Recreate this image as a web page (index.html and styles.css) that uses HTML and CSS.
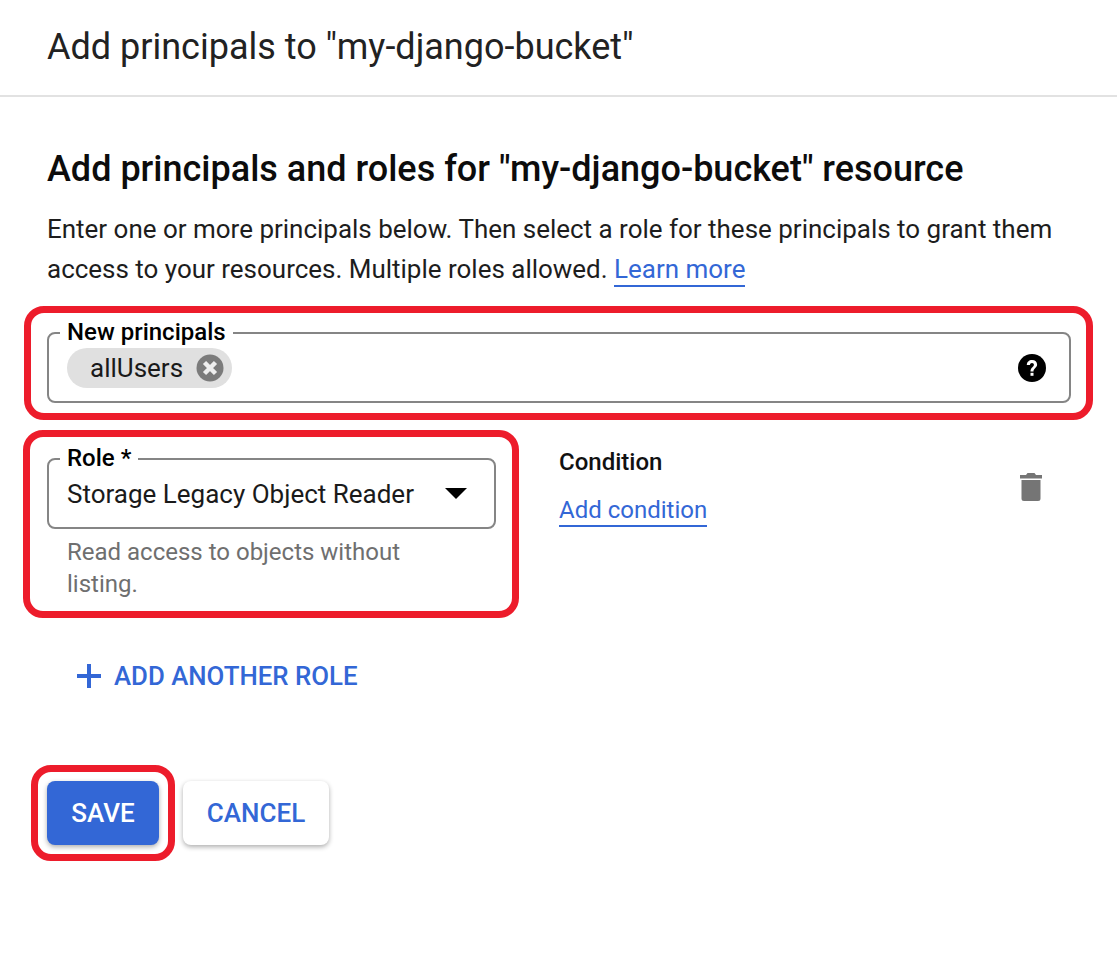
FILE: index.html
```html
<!DOCTYPE html>
<html lang="en">
<head>
<meta charset="utf-8">
<title>Add principals</title>
<link rel="stylesheet" href="styles.css">
</head>
<body>
<header class="top">
  <h1 class="title">Add principals to "my-django-bucket"</h1>
</header>
<main class="content">
  <h2 class="heading">Add principals and roles for "my-django-bucket" resource</h2>
  <p class="intro">Enter one or more principals below. Then select a role for these principals to grant them access to your resources. Multiple roles allowed. <a class="link" href="#">Learn more</a></p>

  <div class="field principals">
    <span class="mark mark-principals"></span>
    <span class="label">New principals</span>
    <span class="chip">
      <span class="chip-text">allUsers</span>
      <svg class="chip-x" viewBox="0 0 28 28" width="28" height="28" aria-hidden="true"><circle cx="14" cy="14" r="13.500" fill="#7b7b7b"/><path d="M8.500 8.500l11 11M19.500 8.500l-11 11" stroke="#eee" stroke-width="4.500" fill="none"/></svg>
    </span>
    <svg class="help" viewBox="0 0 28 28" width="28" height="28" aria-hidden="true"><circle cx="14" cy="14" r="14" fill="#000"/><path d="M8.800 11c0-3 2.200-5 5.300-5s5 1.900 5 4.500c0 3.400-3.600 3.700-3.600 6.900h-3c0-4.100 3.400-4.500 3.400-6.700 0-1-.8-1.800-1.900-1.800s-2 .9-2.100 2.100z" fill="#fff"/><rect x="12.500" y="18.800" width="3" height="3" fill="#fff"/></svg>
  </div>

  <div class="role-row">
    <div class="role-col">
      <span class="mark mark-role"></span>
      <div class="field role">
        <span class="label">Role *</span>
        <span class="role-value">Storage Legacy Object Reader</span>
        <span class="caret"></span>
      </div>
      <p class="hint">Read access to objects without listing.</p>
    </div>
    <div class="condition">
      <div class="condition-title">Condition</div>
      <a class="link" href="#">Add condition</a>
    </div>
    <svg class="trash" viewBox="0 0 24 30" width="24" height="30" aria-hidden="true"><path d="M8.500 1h7l1.500 2h6v3.500H1V3h6zM2.500 8h19v18.500a2.500 2.500 0 0 1-2.500 2.500H5a2.500 2.500 0 0 1-2.500-2.500z" fill="#757575"/></svg>
  </div>

  <div class="add-role">
    <svg class="plus" viewBox="0 0 24 24" width="24" height="24" aria-hidden="true"><path d="M10 0h4v10h10v4H14v10h-4V14H0v-4h10z" fill="#3367d6"/></svg>
    <span>ADD ANOTHER ROLE</span>
  </div>

  <div class="actions">
    <button class="btn primary" type="button"><span class="mark mark-save"></span>SAVE</button>
    <button class="btn secondary" type="button">CANCEL</button>
  </div>
</main>
</body>
</html>
```

FILE: styles.css
```css
* { box-sizing: border-box; }
html, body { margin: 0; padding: 0; background: #fff; }
body { font-family: Roboto, "Liberation Sans", sans-serif; color: #000; width: 1117px; height: 958px; overflow: hidden; }

.top { height: 97px; border-bottom: 2px solid #e2e2e2; padding: 24px 47px 0; }
.title { margin: 0; font-size: 36px; line-height: 46px; font-weight: 400; color: #222; }

.content { padding: 49px 47px 0; }
.heading { margin: 0; font-size: 36px; line-height: 46px; font-weight: 500; color: #0c0c0c; }
.intro { margin: 17px 0 0; font-size: 25.980px; line-height: 40px; color: #1d1d1d; width: 1023px; }
.link { color: #3367d6; text-decoration: none; border-bottom: 2px solid #3367d6; padding-bottom: 1px; }

.field { position: relative; border: 2px solid #858585; border-radius: 8px; }
.label { position: absolute; left: 11px; top: -15px; padding: 0 7px; background: #fff; font-size: 24px; line-height: 26px; font-weight: 500; color: #000; }
.principals { display: flex; align-items: center; justify-content: space-between; height: 71px; margin-top: 43px; padding: 0 23px 0 18px; width: 1024px; }
.chip { display: flex; align-items: center; height: 40px; margin-top: 0; padding: 0 8px 0 23px; border-radius: 20px; background: #e0e0e0; gap: 13px; }
.chip-text { font-size: 26px; color: #1a1a1a; }
.help { margin-top: 0; }

.mark { position: absolute; border: 7px solid #ed1c2b; border-radius: 20px; pointer-events: none; }
.mark-principals { left: -25px; top: -28px; width: 1069px; height: 114px; }
.mark-role { left: -24px; top: -28px; width: 496px; height: 188px; }
.mark-save { left: -16px; top: -16px; width: 144px; height: 96px; }

.role-row { display: flex; margin-top: 55px; position: relative; width: 1023px; }
.role-col { position: relative; width: 449px; }
.role { display: flex; align-items: center; justify-content: space-between; height: 71px; padding: 0 27px 0 18px; }
.role-value { font-size: 26px; color: #1a1a1a; }
.caret { width: 0; height: 0; border-left: 11px solid transparent; border-right: 11px solid transparent; border-top: 11px solid #000; }
.hint { margin: 7px 0 0 20px; font-size: 24px; line-height: 32px; color: #6f6f6f; width: 380px; }

.condition { margin-left: 63px; margin-top: -11px; }
.condition-title { font-size: 24px; line-height: 30px; font-weight: 500; color: #111; margin-top: 0; margin-bottom: 17px; }
.condition .link { font-size: 24px; line-height: 32px; }
.trash { margin-left: auto; margin-right: 27px; margin-top: 14px; }

.add-role { display: flex; align-items: center; gap: 13px; margin: 60px 0 0 30px; font-size: 25.800px; line-height: 32px; font-weight: 500; color: #3367d6; }

.actions { display: flex; gap: 24px; margin-top: 89px; }
.btn { position: relative; height: 64px; border: 0; border-radius: 8px; font: 500 26px Roboto, "Liberation Sans", sans-serif; box-shadow: 0 2px 5px rgba(0,0,0,.32); }
.primary { width: 112px; background: #3367d6; color: #fff; }
.secondary { width: 146px; background: #fff; color: #3367d6; }
```
